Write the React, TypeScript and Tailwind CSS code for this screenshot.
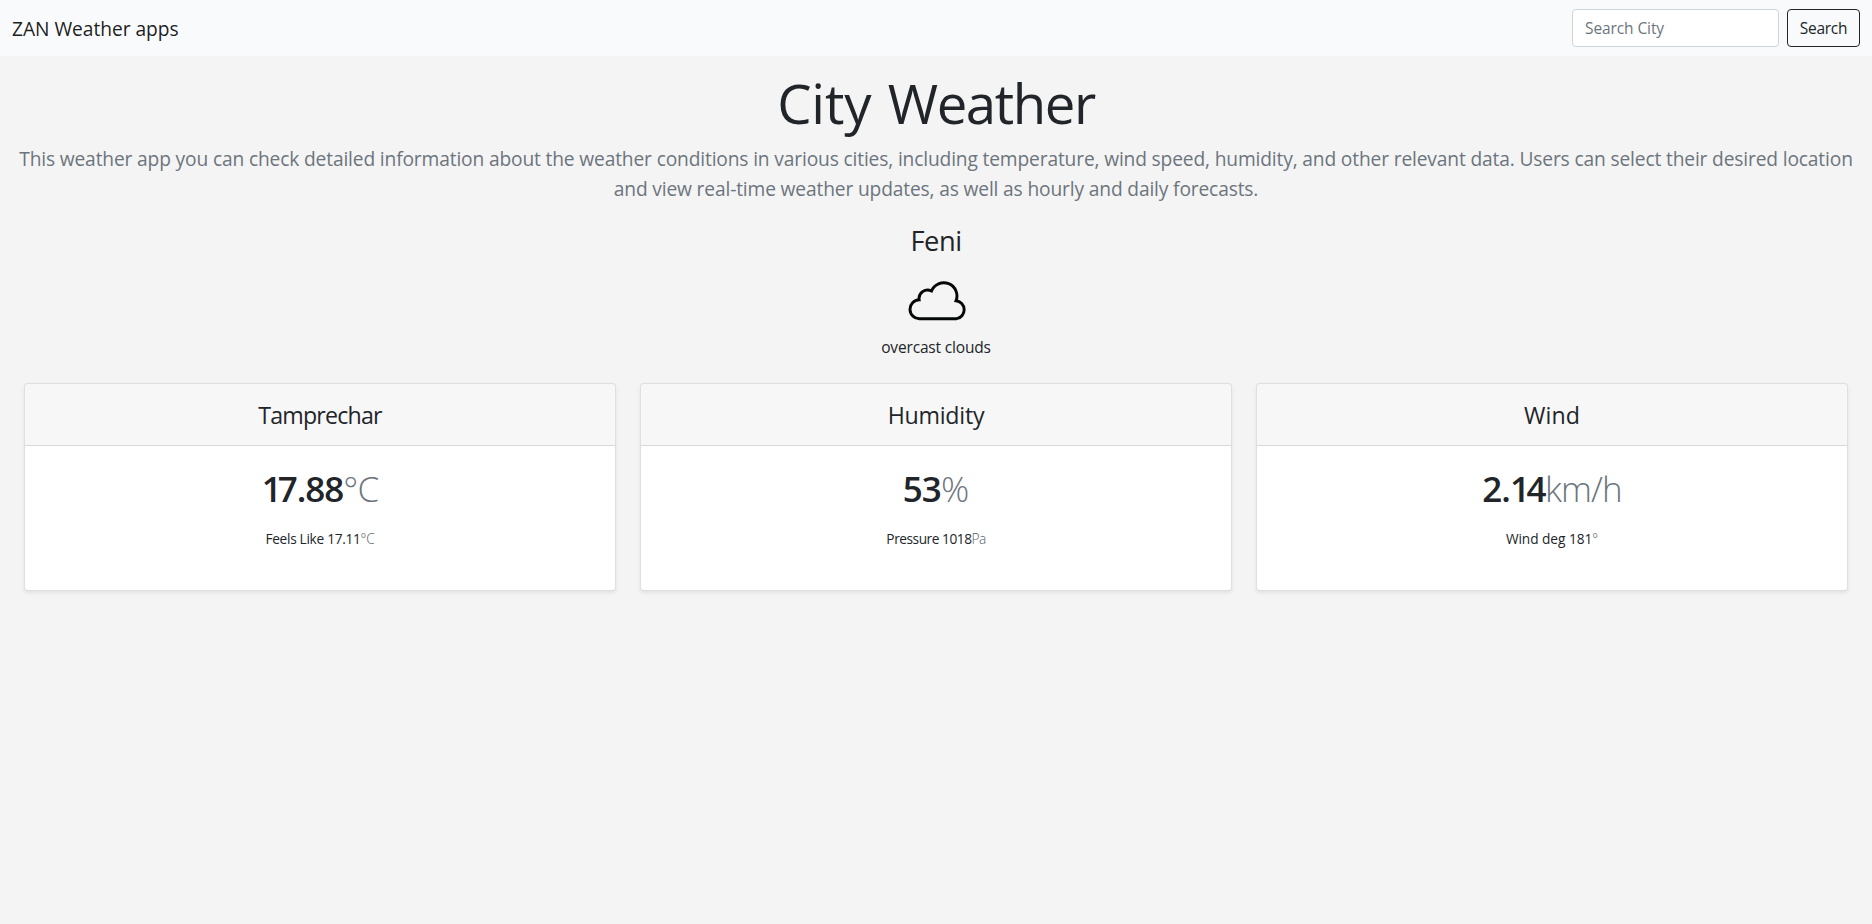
import React from "react";

type Run = { text: string; className: string };

type Reading = {
  title: Run;
  value: Run[];
  unit: Run;
  detail: Run;
  detailUnit: Run;
};

const readings: Reading[] = [
  {
    title: { text: "Tamprechar", className: "tracking-[-0.8px]" },
    value: [
      { text: "1", className: "tracking-[-4px]" },
      { text: "7.88", className: "tracking-[-1px]" },
    ],
    unit: { text: "°C", className: "tracking-[-0.8px]" },
    detail: { text: "Feels Like 17.11", className: "tracking-[-0.3px]" },
    detailUnit: { text: "°C", className: "tracking-[-0.2px]" },
  },
  {
    title: { text: "Humidity", className: "tracking-[-0.25px]" },
    value: [{ text: "53", className: "tracking-[-0.9px]" }],
    unit: { text: "%", className: "" },
    detail: { text: "Pressure 1018", className: "tracking-[-0.45px]" },
    detailUnit: { text: "Pa", className: "tracking-[-0.6px]" },
  },
  {
    title: { text: "Wind", className: "tracking-[0.1px]" },
    value: [
      { text: "2.", className: "tracking-[-0.9px]" },
      { text: "1", className: "tracking-[-3.4px]" },
      { text: "4", className: "tracking-[-1.6px]" },
    ],
    unit: { text: "km/h", className: "tracking-[-0.9px]" },
    detail: { text: "Wind deg 181", className: "tracking-[-0.05px]" },
    detailUnit: { text: "°", className: "" },
  },
];

function Navbar() {
  return (
    <nav className="flex h-14 items-center justify-between bg-[#f8fafc] px-3">
      <a href="#" className="mt-0.5 text-[19.2px] leading-[30px] tracking-[-0.04px] text-black/90">
        ZAN Weather apps
      </a>
      <form className="flex gap-2" onSubmit={(e) => e.preventDefault()}>
        <input
          type="search"
          placeholder="Search City"
          className="h-[38px] w-[207px] rounded border border-[#ced4da] bg-white px-3 py-1.5 text-[15.5px] leading-6 tracking-[-0.1px] text-[#212529] outline-none placeholder:text-[#6c757d]"
        />
        <button
          type="submit"
          className="h-[38px] w-[73px] rounded border border-[#212529] text-center text-[15.5px] leading-6 tracking-[-0.3px] text-[#212529]"
        >
          Search
        </button>
      </form>
    </nav>
  );
}

function CloudIcon() {
  return (
    <svg className="ml-1 h-10 w-[60px]" viewBox="36 33 180 120" fill="none" stroke="#060808" strokeWidth="8.8">
      <path d="M71 146 A28 28 0 0 1 69.5 89.5 A25.5 25.5 0 0 1 106.5 63 A39 39 0 0 1 180 92.5 A27 27 0 0 1 182 146 Z" />
    </svg>
  );
}

function ReadingCard({ r }: { r: Reading }) {
  return (
    <section className="h-[208px] rounded border border-black/[0.125] bg-white text-center shadow-[0_2px_4px_rgba(0,0,0,0.075)]">
      <header className="h-[62px] rounded-t-[3px] border-b border-black/[0.125] bg-black/[0.03] pt-[15px]">
        <h4 className={`text-[23.2px] leading-8 ${r.title.className}`}>{r.title.text}</h4>
      </header>
      <div className="pt-[19px]">
        <p className="text-[35px] leading-[47px] whitespace-nowrap">
          {r.value.map((v) => (
            <span key={v.text} className={`font-semibold ${v.className}`}>
              {v.text}
            </span>
          ))}
          <span className={`font-light text-[#6c757d] ${r.unit.className}`}>{r.unit.text}</span>
        </p>
        <p className="mt-[17px] text-[13.7px] leading-[19px] whitespace-nowrap">
          <span className={r.detail.className}>{r.detail.text}</span>
          <span className={`font-light text-[#565e66] ${r.detailUnit.className}`}>{r.detailUnit.text}</span>
        </p>
      </div>
    </section>
  );
}

export default function App() {
  return (
    <div className="min-h-screen bg-[#f4f4f4] font-['Open_Sans','Noto_Sans',sans-serif] text-[#212529]">
      <Navbar />
      <main className="flex flex-col pt-2.5">
        <div className="flex flex-col items-center text-center">
          <h1 className="text-[54.5px] leading-[74px] whitespace-nowrap">
            <span className="tracking-[-0.1px]">City</span>{" "}
            <span className="ml-0.5 tracking-[-1.4px]">Weather</span>
          </h1>
          <p className="mt-1 text-[19.2px] leading-[30px] tracking-[-0.15px] whitespace-nowrap text-[#6c757d]">
            This weather app you can check detailed information about the weather conditions in various cities,
            including temperature, wind speed, humidity, and other relevant data. Users can select their desired
            location
            <br />
            and view real-time weather updates, as well as hourly and daily forecasts.
          </p>
          <h3 className="mt-[18px] text-[27.3px] leading-[37px] tracking-[-0.5px]">Feni</h3>
          <div className="mt-[22px]">
            <CloudIcon />
          </div>
          <p className="mt-3.5 text-[15.5px] leading-6 tracking-[-0.17px]">overcast clouds</p>
        </div>
        <div className="mt-6 grid grid-cols-3 gap-6 px-6">
          {readings.map((r) => (
            <ReadingCard key={r.title.text} r={r} />
          ))}
        </div>
      </main>
    </div>
  );
}
